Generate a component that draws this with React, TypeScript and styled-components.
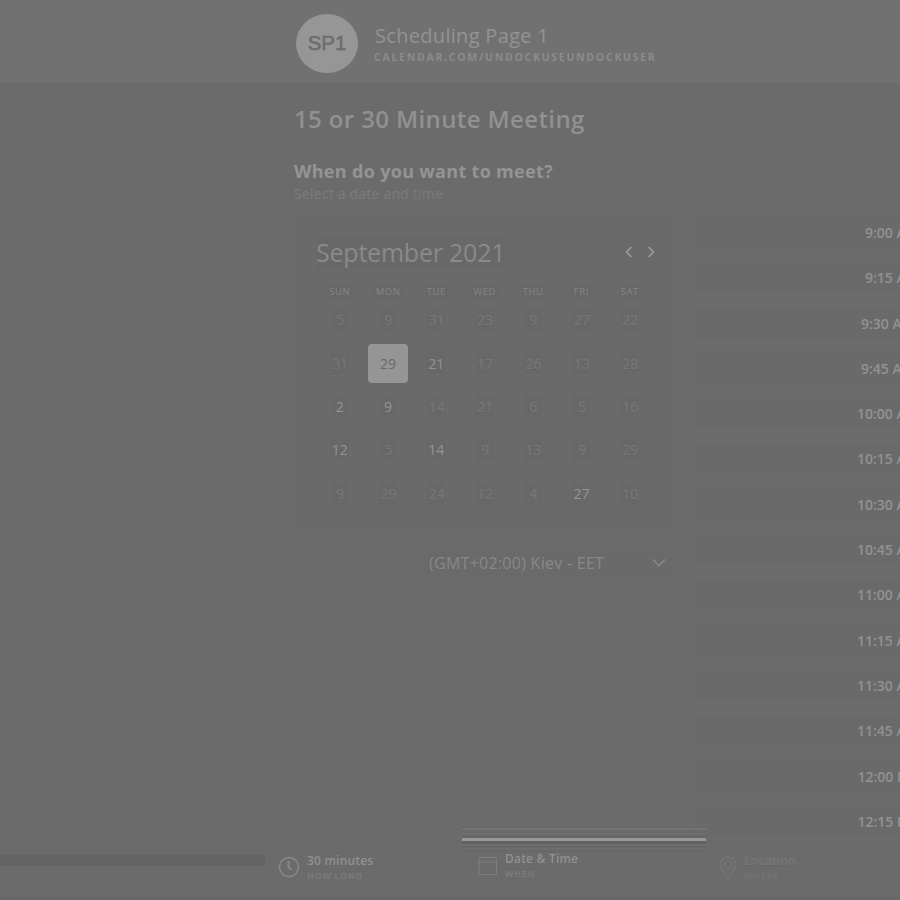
import React from "react";
import styled, { createGlobalStyle } from "styled-components";

const Global = createGlobalStyle`
  * { box-sizing: border-box; }
  body { margin: 0; background: #6b6b6b; overflow: hidden; font-family: "Open Sans", sans-serif; }
`;

const Page = styled.div`
  width: 900px; height: 900px; overflow: hidden;
  display: flex; flex-direction: column; background: #6b6b6b; color: #919191;
`;
const Header = styled.header`
  height: 83px; flex: none; background: #717171; padding: 14px 0 0 296px;
  display: flex; gap: 16px;
`;
const Avatar = styled.div`
  width: 62px; height: 59px; border-radius: 50%; background: #969696; color: #6c6c6c;
  display: flex; align-items: center; justify-content: center; padding-bottom: 1px;
  font: 400 20.5px "Liberation Sans", sans-serif; -webkit-text-stroke: 0.5px #6c6c6c;
`;
const Owner = styled.div`
  padding-top: 8px; display: flex; flex-direction: column;
`;
const OwnerName = styled.div`
  padding-left: 1px; font-size: 20px; line-height: 28px; letter-spacing: 0.31px; color: #939393; white-space: nowrap;
`;
const OwnerUrl = styled.div`
  font-size: 10.5px; line-height: 15px; font-weight: 700; letter-spacing: 1.73px; color: #8c8c8c; white-space: nowrap;
`;
const Main = styled.main`
  height: 760px; flex: none; display: flex; overflow: hidden;
`;
const Left = styled.section`
  width: 695px; flex: none; padding: 20px 0 0 294px;
`;
const Title = styled.h1`
  margin: 0; font-size: 24px; line-height: 32px; font-weight: 600; letter-spacing: 0.38px; color: #919191; white-space: nowrap;
`;
const Question = styled.h2`
  margin: 22px 0 0; font-size: 18px; line-height: 28px; font-weight: 700; letter-spacing: 0.32px; color: #949494;
`;
const Hint = styled.div`
  font-size: 14px; line-height: 18px; letter-spacing: 0.21px; color: #7b7b7b;
`;
const Calendar = styled.div`
  margin-top: 12px; width: 382px; height: 319px; border: 1px solid #6d6d6d; border-radius: 5px;
  padding: 18px 20px 0 21px; background: #6a6a6a;
`;
const MonthBar = styled.div`
  display: flex; justify-content: space-between; align-items: center; height: 36px;
`;
const Month = styled.div`
  font-size: 25px; letter-spacing: -0.22px; color: #8a8a8a; background: #686868; white-space: nowrap; line-height: 33px;
`;
const Arrows = styled.div`
  display: flex; gap: 14px; color: #9c9c9c;
`;
const Week = styled.div`
  display: grid; grid-template-columns: repeat(7, 48.35px); margin-left: -0.5px;
`;
const WeekHead = styled(Week)`
  margin-top: 10px; height: 18px;
`;
const DayName = styled.div`
  display: flex; justify-content: center; align-items: center; height: 22px; font-size: 9.5px; letter-spacing: 0.55px; color: #858585;
  span { background: #686868; padding: 0 2px; line-height: 13px; }
`;
type Tone = "clear" | "faint" | "selected";
const Day = styled.div<{ $tone: Tone }>`
  height: 43.4px; display: flex; align-items: center; justify-content: center;
  font-size: 14px; color: ${p => (p.$tone === "faint" ? "#767676" : p.$tone === "selected" ? "#696969" : "#949494")};
  text-shadow: ${p => (p.$tone === "faint" ? "1px 0 #707070, -1px 1px #646464" : "none")};
  span {
    display: flex; align-items: center; justify-content: center;
    width: ${p => (p.$tone === "selected" ? "40px" : "18px")};
    height: ${p => (p.$tone === "selected" ? "39px" : "22px")};
    border-radius: ${p => (p.$tone === "selected" ? "4px" : "0")};
    background: ${p => (p.$tone === "selected" ? "#959595" : "#686868")};
  }
`;
const Zone = styled.div`
  margin: 12px 0 0 125px; width: 257px; height: 33px; border: 1px solid #6c6c6c; border-radius: 4px; background: #6a6a6a;
  display: flex; align-items: center; justify-content: space-between; padding: 0 9px;
  font-size: 16px; letter-spacing: 0.27px; color: #888; white-space: nowrap;
`;
const Slots = styled.section`
  flex: 1; padding-top: 131px; overflow: hidden;
`;
const Slot = styled.div<{ $start: number }>`
  width: 394px; height: 37px; margin-bottom: 8.3px; border: 1px solid #6e6e6e; border-radius: 4px; background: #6a6a6a;
  padding-left: ${p => p.$start}px; font-size: 14px; line-height: 35px; font-weight: 600; color: #929292; white-space: nowrap;
`;
const Footer = styled.footer`
  position: relative; height: 57px; flex: none; border-top: 1px solid #6e6e6e; border-bottom: 3px solid #676767;
  padding: 9px 0 0 278px; display: flex; background: #6b6b6b;
`;
const Shade = styled.div`
  position: absolute; left: 0; top: 11px; width: 265px; height: 11px; background: #646464;
`;
const ActiveLine = styled.div`
  position: absolute; left: 462px; top: -17px; width: 244px; height: 28px;
  background: linear-gradient(to bottom,
    #686868 0 1px, #747474 1px 3px, #696969 3px 6px, #707070 6px 8px, #676767 8px 11px,
    #999 11px 14px, #636363 14px 17px, #6d6d6d 17px 19px, #676767 19px 21px, #6e6e6e 21px 23px, #686868 23px 25px, #6b6b6b 25px 28px);
`;
const Step = styled.div<{ $width: number; $tone: "done" | "active" | "next" }>`
  position: relative; width: ${p => p.$width}px; display: flex; gap: 7px;
  color: ${p => (p.$tone === "next" ? "#757575" : "#888")};
  margin-top: ${p => (p.$tone === "active" ? "-2px" : "0")};
  svg { flex: none; margin-top: 3px; }
`;
const StepText = styled.div<{ $next?: boolean }>`
  display: flex; flex-direction: column;
  b { font-size: 12px; line-height: 16px; font-weight: 600; letter-spacing: 0.2px; white-space: nowrap; color: ${p => (p.$next ? "#767676" : "#919191")}; text-shadow: ${p => (p.$next ? "1px 0 #717171, 0 1px #656565" : "none")}; }
  small { font-size: 9px; line-height: 13px; letter-spacing: 0.7px; font-weight: 600; color: ${p => (p.$next ? "#747474" : "#7d7d7d")}; }
`;

const clearDays = new Set(["2-0", "2-1", "1-2", "3-0", "3-2", "4-5"]);
const weeks = [
  ["5", "9", "31", "23", "9", "27", "22"],
  ["31", "29", "21", "17", "26", "13", "28"],
  ["2", "9", "14", "21", "6", "5", "16"],
  ["12", "5", "14", "9", "13", "9", "29"],
  ["9", "29", "24", "12", "4", "27", "10"],
];
const times: [string, number][] = [
  ["9:00 AM", 169], ["9:15 AM", 169], ["9:30 AM", 165], ["9:45 AM", 165],
  ["10:00 AM", 161], ["10:15 AM", 161], ["10:30 AM", 161], ["10:45 AM", 161],
  ["11:00 AM", 161], ["11:15 AM", 161], ["11:30 AM", 161], ["11:45 AM", 161],
  ["12:00 PM", 161.5], ["12:15 PM", 161.5],
];

const Chevron = ({ d, w, h }: { d: string; w: number; h: number }) => (
  <svg width={w} height={h} viewBox={`0 0 ${w} ${h}`} fill="none" stroke="currentColor" strokeWidth="1.6"><path d={d} /></svg>
);

export default function App() {
  return (
    <Page>
      <Global />
      <Header>
        <Avatar>SP1</Avatar>
        <Owner>
          <OwnerName>Scheduling Page 1</OwnerName>
          <OwnerUrl>CALENDAR.COM/UNDOCKUSEUNDOCKUSER</OwnerUrl>
        </Owner>
      </Header>
      <Main>
        <Left>
          <Title>15 or 30 Minute Meeting</Title>
          <Question>When do you want to meet?</Question>
          <Hint>Select a date and time</Hint>
          <Calendar>
            <MonthBar>
              <Month>September 2021</Month>
              <Arrows>
                <Chevron w={8} h={12} d="M6.5 1 L1.5 6 L6.5 11" />
                <Chevron w={8} h={12} d="M1.5 1 L6.5 6 L1.5 11" />
              </Arrows>
            </MonthBar>
            <WeekHead>
              {["SUN", "MON", "TUE", "WED", "THU", "FRI", "SAT"].map(d => <DayName key={d}><span>{d}</span></DayName>)}
            </WeekHead>
            {weeks.map((week, r) => (
              <Week key={r}>
                {week.map((day, c) => (
                  <Day key={c} $tone={r === 1 && c === 1 ? "selected" : clearDays.has(`${r}-${c}`) ? "clear" : "faint"}>
                    <span>{day}</span>
                  </Day>
                ))}
              </Week>
            ))}
          </Calendar>
          <Zone>
            (GMT+02:00) Kiev - EET
            <Chevron w={14} h={9} d="M1 1.5 L7 7.5 L13 1.5" />
          </Zone>
        </Left>
        <Slots>
          {times.map(([time, start]) => <Slot key={time} $start={start}>{time}</Slot>)}
        </Slots>
      </Main>
      <Footer>
        <Shade />
        <ActiveLine />
        <Step $width={200} $tone="done">
          <svg width="22" height="22" viewBox="0 0 22 22" fill="none" stroke="currentColor" strokeWidth="1.6">
            <circle cx="11" cy="11" r="9.5" /><path d="M10.5 5 V11 L13.5 14" strokeWidth="2" />
          </svg>
          <StepText><b>30 minutes</b><small>HOW LONG</small></StepText>
        </Step>
        <Step $width={241} $tone="active">
          <svg width="20" height="22" viewBox="0 0 20 22" fill="none" stroke="#7d7d7d" strokeWidth="1.2">
            <rect x="1" y="3.5" width="17.5" height="17" rx="1" /><path d="M1 8 H18.5 M5 1 V4 M14.5 1 V4" />
          </svg>
          <StepText><b>Date &amp; Time</b><small>WHEN</small></StepText>
        </Step>
        <Step $width={100} $tone="next">
          <svg width="18" height="24" viewBox="0 0 17 23" fill="none" stroke="currentColor" strokeWidth="1.4">
            <path d="M8.5 22 C7 17 1 14 1 8.5 A7.5 7.5 0 0 1 16 8.5 C16 14 10 17 8.5 22 Z" /><circle cx="8.5" cy="8.5" r="3.5" />
          </svg>
          <StepText $next><b>Location</b><small>WHERE</small></StepText>
        </Step>
      </Footer>
    </Page>
  );
}
